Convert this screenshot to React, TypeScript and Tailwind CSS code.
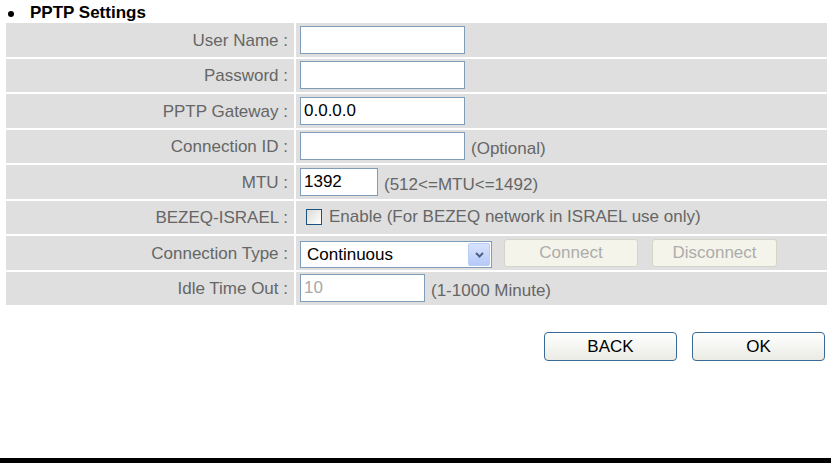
import React from "react";

const Row = ({ label, children }: { label: string; children?: React.ReactNode }) => (
  <div className="flex gap-[2px] h-[33.5px]">
    <div className="w-[288px] shrink-0 bg-[#dfdfdf] flex items-center justify-end pr-[6px] pt-[2px] text-[#666666]">
      {label}
    </div>
    <div className="flex-1 bg-[#dfdfdf] flex items-center pl-[4px] text-[#666666]">{children}</div>
  </div>
);

const inputBase =
  "h-[28px] border border-[#7f9db9] bg-white px-[3px] text-[17px] outline-none font-['Liberation_Sans',Arial,sans-serif]";

export default function App() {
  return (
    <div className="w-[831px] h-[463px] bg-white flex flex-col font-['Liberation_Sans',Arial,sans-serif] text-[17px] leading-[20px]">
      <div className="h-[23px] flex items-center pl-[8px] pt-[2px]">
        <span className="w-[6px] h-[6px] rounded-full bg-black mt-[2px]" />
        <span className="ml-[16px] font-bold text-black text-[17px]">PPTP Settings</span>
      </div>
      <div className="ml-[6px] mr-[4px] flex flex-col gap-[2px]">
        <Row label="User Name :">
          <input className={`${inputBase} text-black w-[165px]`} defaultValue="" />
        </Row>
        <Row label="Password :">
          <input className={`${inputBase} text-black w-[165px]`} type="password" defaultValue="" />
        </Row>
        <Row label="PPTP Gateway :">
          <input className={`${inputBase} text-black w-[165px]`} defaultValue="0.0.0.0" />
        </Row>
        <Row label="Connection ID :">
          <input className={`${inputBase} text-black w-[165px]`} defaultValue="" />
          <span className="ml-[6px] mt-[6px]">(Optional)</span>
        </Row>
        <Row label="MTU :">
          <input className={`${inputBase} text-black w-[78px]`} defaultValue="1392" />
          <span className="ml-[6px] mt-[6px]">(512&lt;=MTU&lt;=1492)</span>
        </Row>
        <Row label="BEZEQ-ISRAEL :">
          <span className="ml-[6px] w-[16px] h-[16px] border border-[#1c5180] bg-gradient-to-br from-[#dcdcd4] to-white" />
          <span className="ml-[7px]">Enable (For BEZEQ network in ISRAEL use only)</span>
        </Row>
        <Row label="Connection Type :">
          <div className="w-[192px] h-[27px] mt-[4px] border border-[#7f9db9] bg-white flex items-stretch">
            <span className="flex-1 flex items-center pl-[6px] text-black">Continuous</span>
            <span className="w-[22px] m-[1px] rounded-[2px] border border-[#b9cdf5] bg-gradient-to-b from-[#d8e3fd] to-[#b5c9f8] flex items-center justify-center">
              <svg width="9" height="6" viewBox="0 0 9 6">
                <path d="M1 1 L4.5 4.5 L8 1" stroke="#4d6185" strokeWidth="2" fill="none" />
              </svg>
            </span>
          </div>
          <button className="ml-[12px] w-[134px] h-[28px] rounded-[3px] border border-[#d5d4c8] bg-[#f5f4ea] text-[#acacac]">
            Connect
          </button>
          <button className="ml-[14px] w-[125px] h-[28px] rounded-[3px] border border-[#d5d4c8] bg-[#f5f4ea] text-[#acacac]">
            Disconnect
          </button>
        </Row>
        <Row label="Idle Time Out :">
          <input className={`${inputBase} text-[#a8a8a8] w-[125px]`} defaultValue="10" readOnly />
          <span className="ml-[6px] mt-[6px]">(1-1000 Minute)</span>
        </Row>
      </div>
      <div className="flex justify-end gap-[15px] mr-[6px] mt-[27px]">
        <button className="w-[133px] h-[29px] rounded-[4px] border border-[#3a6a96] bg-gradient-to-b from-white to-[#ebebe4] text-black">
          BACK
        </button>
        <button className="w-[133px] h-[29px] rounded-[4px] border border-[#3a6a96] bg-gradient-to-b from-white to-[#ebebe4] text-black">
          OK
        </button>
      </div>
      <div className="mt-auto h-[5px] bg-black" />
    </div>
  );
}
